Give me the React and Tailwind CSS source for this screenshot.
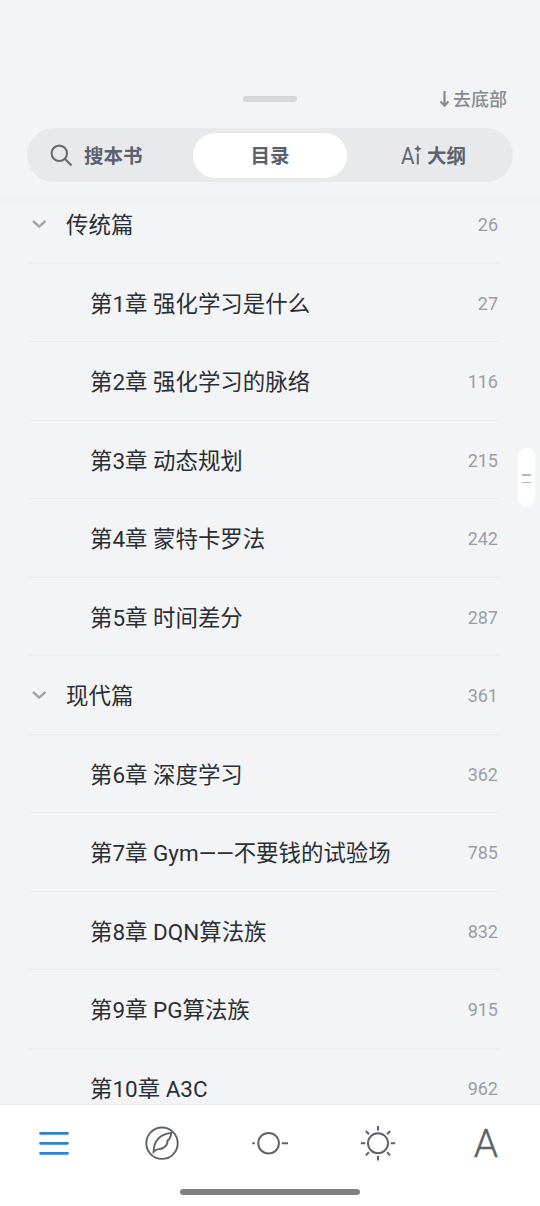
import React from 'react';

const chapters = [
  { title: '传统篇', page: 26, group: true },
  { title: '第1章 强化学习是什么', page: 27 },
  { title: '第2章 强化学习的脉络', page: 116 },
  { title: '第3章 动态规划', page: 215 },
  { title: '第4章 蒙特卡罗法', page: 242 },
  { title: '第5章 时间差分', page: 287 },
  { title: '现代篇', page: 361, group: true },
  { title: '第6章 深度学习', page: 362 },
  { title: '第7章 Gym——不要钱的试验场', page: 785 },
  { title: '第8章 DQN算法族', page: 832 },
  { title: '第9章 PG算法族', page: 915 },
  { title: '第10章 A3C', page: 962 },
];

const Header = () => (
  <header className="h-[201px] shrink-0 border-b-2 border-[#eeeff1] px-[27px] pt-[86px]">
    <div className="grid h-[26px] grid-cols-3 items-center">
      <span />
      <span className="mb-px h-[6px] w-[54px] justify-self-center rounded-full bg-[#d5d6d8]" />
      <button className="flex items-center gap-[3px] justify-self-end pr-[6px] text-[18px] leading-none font-medium text-[#858b95]">
        <svg width="11" height="18" viewBox="0 0 11 18" fill="none" stroke="currentColor" strokeWidth="2.2">
          <path d="M5.5 1v14.5M1.5 11.5l4 4.2 4-4.2" />
        </svg>
        <span className="pt-[2px]">去底部</span>
      </button>
    </div>

    {/* Tabs */}
    <div className="mt-4 grid h-[54px] grid-cols-[162px_162px_162px] items-center rounded-full bg-[#e8e9eb] text-[19.5px] leading-none font-bold text-[#5b626d]">
      <button className="flex items-center gap-[11px] pl-[23px]">
        <svg width="23" height="23" viewBox="0 0 23 23" fill="none" stroke="#676b71" strokeWidth="2.1">
          <circle cx="9.3" cy="9.3" r="7.7" />
          <path d="M14.8 14.8l6.7 6.7" />
        </svg>
        <span className="pt-[3px]">搜本书</span>
      </button>
      <button className="ml-[4px] flex h-[45px] w-[154px] items-center justify-center rounded-full bg-white">
        <span className="pt-[3px]">目录</span>
      </button>
      <button className="flex items-center pl-[50px]">
        <span className="w-[13px] origin-left scale-x-90 pt-[3px] text-[23px] leading-none font-normal text-[#62676e]">A</span>
        <svg className="mr-[5px]" width="8" height="20" viewBox="0 0 8 20" fill="none" stroke="#62676e" strokeWidth="2">
          <path d="M3.8 8.5V19.5" />
          <path d="M3.8 0l1.2 2.6 2.8 1.2-2.8 1.2-1.2 2.8-1.2-2.8L0 3.8l2.6-1.2z" fill="#62676e" stroke="none" />
        </svg>
        <span className="pt-[3px]">大纲</span>
      </button>
    </div>
  </header>
);

const ChapterRow = ({ title, page, group }) => (
  <li className="ml-[30px] mr-[42px] flex h-[78.5px] items-center border-b border-[#e9eaed]">
    {group ? (
      <svg className="mr-[19px] ml-[2px]" width="15" height="10" viewBox="0 0 15 10" fill="none" stroke="#a1a4aa" strokeWidth="2.4">
        <path d="M1 2l6.2 5.6L13.4 2" />
      </svg>
    ) : (
      <span className="w-[60px]" />
    )}
    <span className="pt-[3px] text-[22.45px] leading-none text-[#2a2e35]">{title}</span>
    <span className="ml-auto pt-[3px] text-[18px] leading-none text-[#9a9ea6]">{page}</span>
  </li>
);

const TabBar = () => (
  <footer className="h-[102px] shrink-0 border-t border-[#e8e9eb] bg-white">
    <div className="grid h-[76px] grid-cols-5 items-center justify-items-center text-[#5f6368]">
      <button className="pr-px">
        <svg width="30" height="26" viewBox="0 0 30 26" stroke="#3182ce" strokeWidth="2.8" strokeLinecap="round">
          <path d="M1.5 3.3h27M1.5 13.3h27M1.5 23.3h27" />
        </svg>
      </button>
      <button className="pr-px">
        <svg width="34" height="34" viewBox="0 0 34 34" fill="none" stroke="currentColor" strokeWidth="1.9">
          <circle cx="17" cy="17.2" r="15.7" />
          <path d="M8.6 25.8C8.9 15 15 8.3 26.2 6.9c-.3 3.6-1.2 6.4-3.7 7.8.2 4.6-4.2 8.8-9.2 8.4-1.8.3-3.3 1.2-4.7 2.7z" />
        </svg>
      </button>
      <button className="pr-px">
        <svg width="38" height="26" viewBox="0 0 38 26" fill="none" stroke="currentColor" strokeWidth="2">
          <circle cx="17.6" cy="13.2" r="10.3" />
          <path d="M1.2 13.2h2.7M30.8 13.2h6.2" />
        </svg>
      </button>
      <button>
        <svg width="36" height="36" viewBox="0 0 36 36" fill="none" stroke="currentColor" strokeWidth="2">
          <circle cx="18" cy="18.2" r="10" />
          <path d="M18 1v4.5M18 30.9v4.5M.8 18.2h4.5M30.7 18.2h4.5M5.8 6l3.2 3.2M27 27.2l3.2 3.2M5.8 30.4L9 27.2M27 9.2L30.2 6" />
        </svg>
      </button>
      <button className="pt-[3px] font-[Roboto] text-[39px] leading-none font-light [-webkit-text-stroke:0.4px_#5f6368]">A</button>
    </div>
    <div className="mx-auto mt-[8px] h-[6px] w-[180px] rounded-full bg-[#808080]" />
  </footer>
);

const App = () => {
  return (
    <div className="relative flex h-[1206px] w-[540px] flex-col overflow-hidden bg-[#f3f4f6] font-[Roboto,'Noto_Sans_CJK_SC',sans-serif]">
      <Header />
      <main className="min-h-0 flex-1 overflow-hidden">
        <ul className="-mt-[16px]">
          {chapters.map((item) => (
            <ChapterRow key={item.title} {...item} />
          ))}
        </ul>
      </main>
      <TabBar />

      {/* Scroll handle */}
      <div className="absolute top-[448px] right-[5px] flex h-[58px] w-[17px] flex-col items-center justify-center gap-[6px] rounded-lg bg-white pt-[3px]">
        <span className="h-[1.5px] w-[9px] bg-[#b5b6b8]" />
        <span className="h-[1.5px] w-[9px] bg-[#b5b6b8]" />
      </div>
    </div>
  );
};

export default App;
